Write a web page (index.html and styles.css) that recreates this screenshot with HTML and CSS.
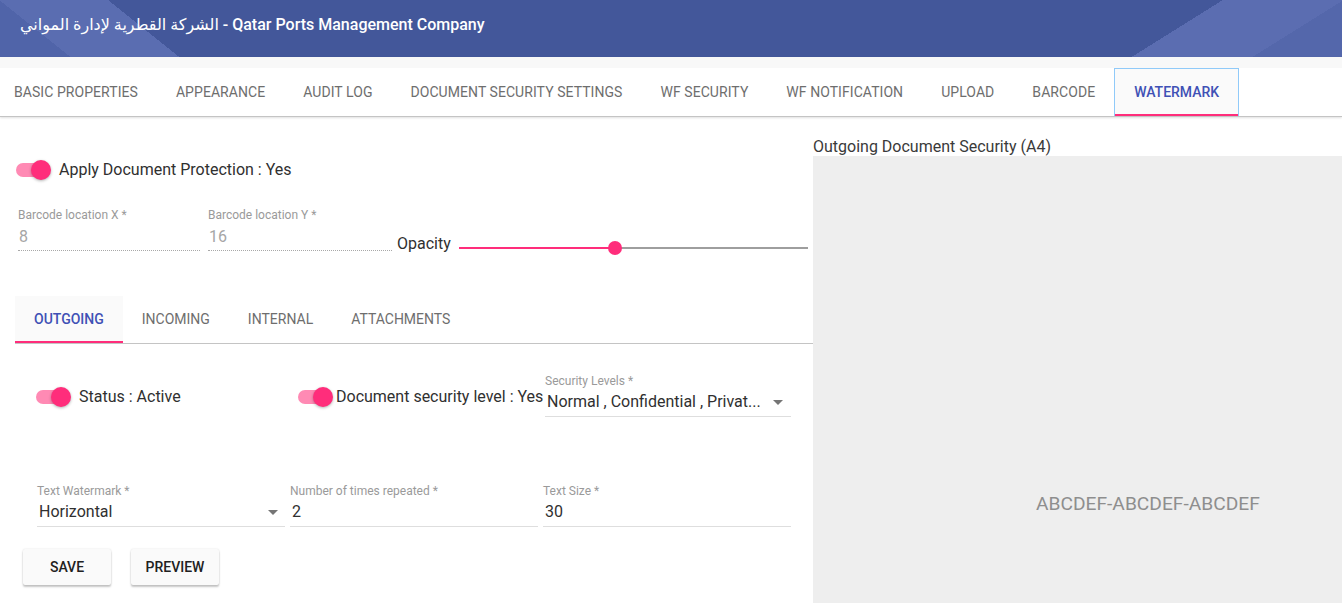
FILE: index.html
```html
<!DOCTYPE html>
<html lang="en">
<head>
<meta charset="utf-8">
<title>Watermark</title>
<link rel="stylesheet" href="styles.css">
</head>
<body>
<header class="appbar">
  <h1 class="app-title">الشركة القطرية لإدارة المواني - Qatar Ports Management Company</h1>
</header>
<nav class="main-tabs">
  <div class="tab-list">
    <span class="tab">Basic Properties</span>
    <span class="tab">Appearance</span>
    <span class="tab">Audit Log</span>
    <span class="tab">Document Security Settings</span>
    <span class="tab">WF Security</span>
    <span class="tab">WF Notification</span>
    <span class="tab">Upload</span>
    <span class="tab">Barcode</span>
    <span class="tab tab-active">Watermark</span>
  </div>
</nav>
<main class="content">
  <section class="settings">
    <div class="toggle-row protect-row">
      <span class="switch"><span class="switch-track"></span><span class="switch-thumb"></span></span>
      <span class="toggle-label">Apply Document Protection : Yes</span>
    </div>
    <div class="barcode-row">
      <div class="field field-dotted field-x">
        <div class="field-label">Barcode location X *</div>
        <div class="field-value">8</div>
      </div>
      <div class="field field-dotted field-y">
        <div class="field-label">Barcode location Y *</div>
        <div class="field-value">16</div>
      </div>
      <span class="opacity-label">Opacity</span>
      <div class="slider">
        <div class="slider-fill" style="width:44.7%"></div>
        <span class="slider-thumb" style="left:44.7%"></span>
      </div>
    </div>
    <div class="sub-tabs">
      <span class="sub-tab sub-tab-active">Outgoing</span>
      <span class="sub-tab">Incoming</span>
      <span class="sub-tab">Internal</span>
      <span class="sub-tab">Attachments</span>
    </div>
    <div class="form-grid status-row">
      <div class="toggle-row toggle-cell">
        <span class="switch"><span class="switch-track"></span><span class="switch-thumb"></span></span>
        <span class="toggle-label">Status : Active</span>
      </div>
      <div class="toggle-row toggle-cell toggle-cell-tight">
        <span class="switch"><span class="switch-track"></span><span class="switch-thumb"></span></span>
        <span class="toggle-label">Document security level : Yes</span>
      </div>
      <div class="field field-solid field-select">
        <div class="field-label">Security Levels *</div>
        <div class="field-value select-value"><span>Normal , Confidential , Privat...</span><span class="caret"></span></div>
      </div>
    </div>
    <div class="form-grid fields-row">
      <div class="field field-solid">
        <div class="field-label">Text Watermark *</div>
        <div class="field-value select-value"><span>Horizontal</span><span class="caret caret-near"></span></div>
      </div>
      <div class="field field-solid">
        <div class="field-label">Number of times repeated *</div>
        <div class="field-value">2</div>
      </div>
      <div class="field field-solid">
        <div class="field-label">Text Size *</div>
        <div class="field-value">30</div>
      </div>
    </div>
    <div class="actions">
      <button class="btn" type="button">Save</button>
      <button class="btn" type="button">Preview</button>
    </div>
  </section>
  <aside class="preview">
    <div class="preview-title">Outgoing Document Security (A4)</div>
    <div class="preview-page">
      <span class="watermark">ABCDEF-ABCDEF-ABCDEF</span>
    </div>
  </aside>
</main>
</body>
</html>
```

FILE: styles.css
```css
* { box-sizing: border-box; }

html, body {
  margin: 0;
  padding: 0;
  overflow: hidden;
}

body {
  font-family: Roboto, "Noto Sans", "DejaVu Sans", sans-serif;
  color: #303030;
  background: #ffffff;
  width: 1342px;
  height: 603px;
}

/* ---------- App bar ---------- */
.appbar {
  height: 57px;
  padding: 15px 20px 0;
  background-color: #43579a;
  background-image:
    linear-gradient(38.7deg, #5064a9 0 44px, #5a6db1 44px 112px, transparent 112px),
    linear-gradient(148deg, transparent 0 648px, #5b6db1 648px 712px, #5467ab 712px);
}

.app-title {
  margin: 0;
  font-size: 16px;
  line-height: 20px;
  font-weight: 500;
  color: #ffffff;
}

/* ---------- Main tabs ---------- */
.main-tabs {
  padding-top: 11px;
  background: #f8f8f8;
  border-bottom: 1px solid #c4c4c4;
  box-shadow: 0 1px 2px rgba(0, 0, 0, 0.12);
  position: relative;
}

.tab-list {
  display: flex;
  height: 48px;
  background: #ffffff;
}

.tab {
  padding: 0 19px;
  height: 48px;
  line-height: 48px;
  font-size: 14px;
  letter-spacing: 0.06px;
  text-transform: uppercase;
  color: #6e6e6e;
  white-space: nowrap;
}

.tab:first-child {
  margin-left: -5px;
}

.tab-active {
  border: 1px solid #90caf9;
  border-bottom: 0;
  line-height: 46px;
  background: #fafafa;
  color: #3f51b5;
  font-weight: 500;
  letter-spacing: 0;
  box-shadow: inset 0 -2px 0 #ff2d7b;
}

/* ---------- Content ---------- */
.content {
  display: flex;
}

.settings {
  flex: 0 0 813px;
  width: 813px;
}

.toggle-row {
  display: flex;
  align-items: center;
  height: 24px;
}

.protect-row {
  margin-top: 41px;
  padding-left: 16px;
}

.switch {
  position: relative;
  flex: 0 0 35px;
  width: 35px;
  height: 20px;
}

.switch-track {
  position: absolute;
  left: 0;
  top: 3px;
  width: 34px;
  height: 14px;
  border-radius: 7px;
  background: #ff8ab4;
}

.switch-thumb {
  position: absolute;
  right: 0;
  top: 0;
  width: 20px;
  height: 20px;
  border-radius: 50%;
  background: #ff2d7b;
  box-shadow: 0 1px 3px rgba(0, 0, 0, 0.3);
}

.toggle-label {
  margin-left: 8px;
  font-size: 16px;
  line-height: 24px;
  color: #303030;
  white-space: nowrap;
}

/* ---------- Fields ---------- */
.field-label {
  font-size: 12px;
  line-height: 14px;
  color: #9a9a9a;
  white-space: nowrap;
}

.field-value {
  margin-top: 4px;
  padding: 0 0 4px 2px;
  font-size: 16px;
  line-height: 20px;
  color: #303030;
  white-space: nowrap;
}

.field-solid .field-value {
  border-bottom: 1px solid #dedede;
}

.field-dotted .field-value {
  margin-top: 5px;
  padding: 0 0 3px 1px;
  color: #a6a6a6;
  border-bottom: 1px dotted #a8a8a8;
}

.barcode-row {
  display: flex;
  align-items: flex-end;
  margin-top: 26px;
  padding-left: 18px;
}

.field-x { width: 182px; }
.field-y { width: 184px; margin-left: 8px; }

.opacity-label {
  margin-left: 5px;
  margin-bottom: -3px;
  font-size: 16px;
  line-height: 20px;
  color: #303030;
}

.slider {
  position: relative;
  flex: 1;
  height: 2px;
  margin: 0 5px 2px 8px;
  background: #9e9e9e;
}

.slider-fill {
  height: 2px;
  background: #ff2d7b;
}

.slider-thumb {
  position: absolute;
  top: -6px;
  width: 14px;
  height: 14px;
  margin-left: -7px;
  border-radius: 50%;
  background: #ff2d7b;
}

/* ---------- Sub tabs ---------- */
.sub-tabs {
  display: flex;
  margin-top: 45px;
  margin-left: 15px;
  height: 48px;
  border-bottom: 1px solid #c4c4c4;
}

.sub-tab {
  padding: 0 19px;
  height: 47px;
  line-height: 46px;
  font-size: 14px;
  text-transform: uppercase;
  color: #6e6e6e;
}

.sub-tab-active {
  background: #fafafa;
  color: #3f51b5;
  font-weight: 500;
  box-shadow: inset 0 -2px 0 #ff2d7b;
}

/* ---------- Form grid ---------- */
.form-grid {
  display: grid;
  grid-template-columns: 248px 248px 248px;
  column-gap: 5px;
  margin-left: 37px;
  align-items: start;
}

.status-row {
  margin-top: 30px;
}

.toggle-cell {
  margin-top: 11px;
  margin-left: -1px;
}

.toggle-cell-tight {
  margin-left: 8px;
}

.toggle-cell-tight .toggle-label {
  margin-left: 3px;
}

.field-select {
  margin-left: 2px;
}

.select-value {
  display: flex;
  align-items: center;
  justify-content: space-between;
  padding-right: 8px;
}

.caret {
  width: 0;
  height: 0;
  border-left: 5px solid transparent;
  border-right: 5px solid transparent;
  border-top: 5px solid #757575;
}

.caret-near {
  margin-right: -1px;
}

.fields-row {
  margin-top: 67px;
}

/* ---------- Buttons ---------- */
.actions {
  display: flex;
  gap: 20px;
  margin-top: 22px;
  margin-left: 23px;
}

.btn {
  width: 88px;
  height: 36px;
  padding: 0;
  border: 0;
  border-radius: 2px;
  background: #fafafa;
  font-family: Roboto, sans-serif;
  font-size: 14px;
  font-weight: 500;
  text-transform: uppercase;
  color: #212121;
  box-shadow: 0 2px 2px rgba(0, 0, 0, 0.22), 0 0 2px rgba(0, 0, 0, 0.12);
}

/* ---------- Preview ---------- */
.preview {
  flex: 1;
  min-width: 0;
}

.preview-title {
  margin-top: 20px;
  font-size: 16px;
  line-height: 19px;
  color: #3a3a3a;
  white-space: nowrap;
}

.preview-page {
  height: 470px;
  background: #eeeeee;
  padding-top: 335px;
  padding-left: 223px;
}

.watermark {
  font-size: 19.2px;
  line-height: 25px;
  color: #8e8e8e;
  white-space: nowrap;
}
```
